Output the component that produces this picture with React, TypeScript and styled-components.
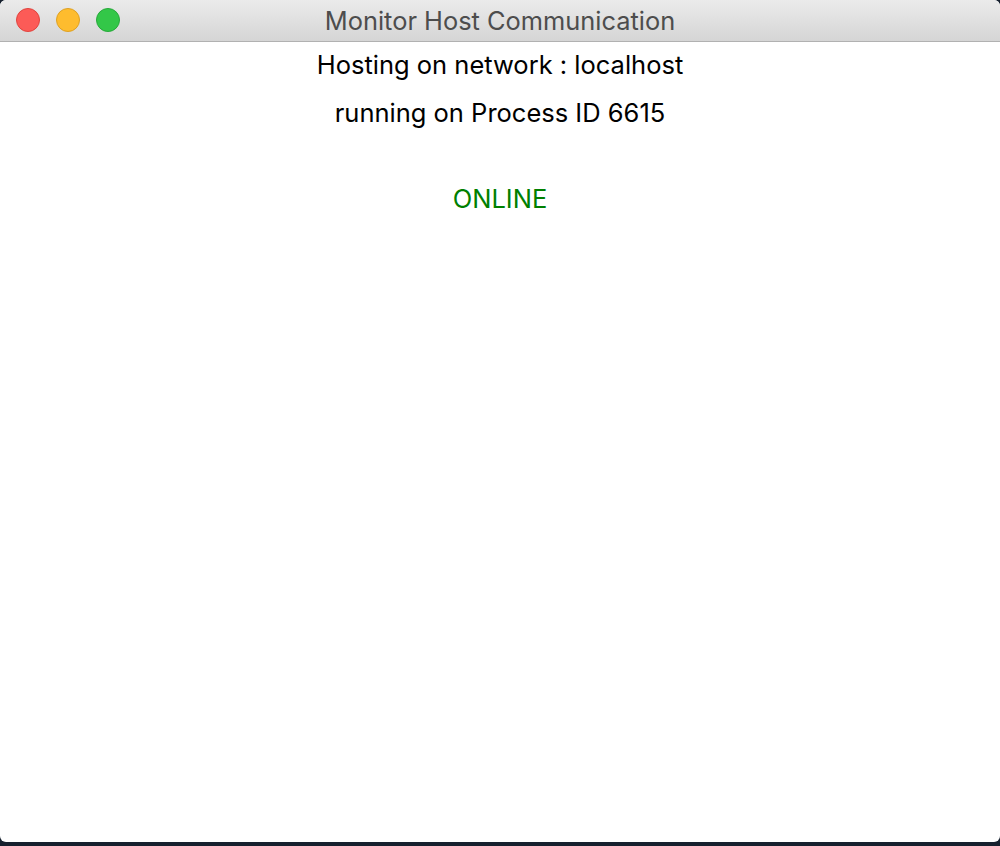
import React from "react";
import styled, { createGlobalStyle } from "styled-components";

const Global = createGlobalStyle`
  html, body { margin: 0; padding: 0; background: #16202e; }
  body { width: 1000px; height: 846px; overflow: hidden; }
`;

const Window = styled.div`
  width: 1000px;
  height: 842px;
  background: #ffffff;
  border-radius: 6px;
  overflow: hidden;
  display: flex;
  flex-direction: column;
  font-family: Inter, "Open Sans", "Liberation Sans", sans-serif;
`;

const TitleBar = styled.div`
  height: 41px;
  flex: none;
  position: relative;
  display: flex;
  align-items: center;
  justify-content: center;
  background: linear-gradient(#ebebeb, #d5d5d5);
  border-bottom: 1px solid #b1b1b1;
`;

const Lights = styled.div`
  position: absolute;
  left: 16px;
  top: 8px;
  display: flex;
  gap: 16px;
`;

const Light = styled.span<{ $fill: string; $edge: string }>`
  width: 24px;
  height: 24px;
  box-sizing: border-box;
  border-radius: 50%;
  background: ${(p) => p.$fill};
  border: 1px solid ${(p) => p.$edge};
`;

const Title = styled.div`
  font-size: 25.4px;
  color: #4d4d4d;
`;

const Content = styled.div`
  flex: 1;
  display: flex;
  flex-direction: column;
  align-items: center;
  margin-top: -1px;
`;

const Line = styled.div`
  font-size: 25.5px;
  line-height: 48px;
  color: #000;
`;

const Status = styled.div`
  margin-top: 42px;
  font-size: 25.5px;
  line-height: 40px;
  color: #008000;
`;

export default function App() {
  return (
    <>
      <Global />
      <Window>
        <TitleBar>
          <Lights>
            <Light $fill="#fc5b57" $edge="#e0443e" />
            <Light $fill="#febc2e" $edge="#dea123" />
            <Light $fill="#33c748" $edge="#27a93a" />
          </Lights>
          <Title>Monitor Host Communication</Title>
        </TitleBar>
        <Content>
          <Line>Hosting on network : localhost</Line>
          <Line>running on Process ID 6615</Line>
          <Status>ONLINE</Status>
        </Content>
      </Window>
    </>
  );
}
